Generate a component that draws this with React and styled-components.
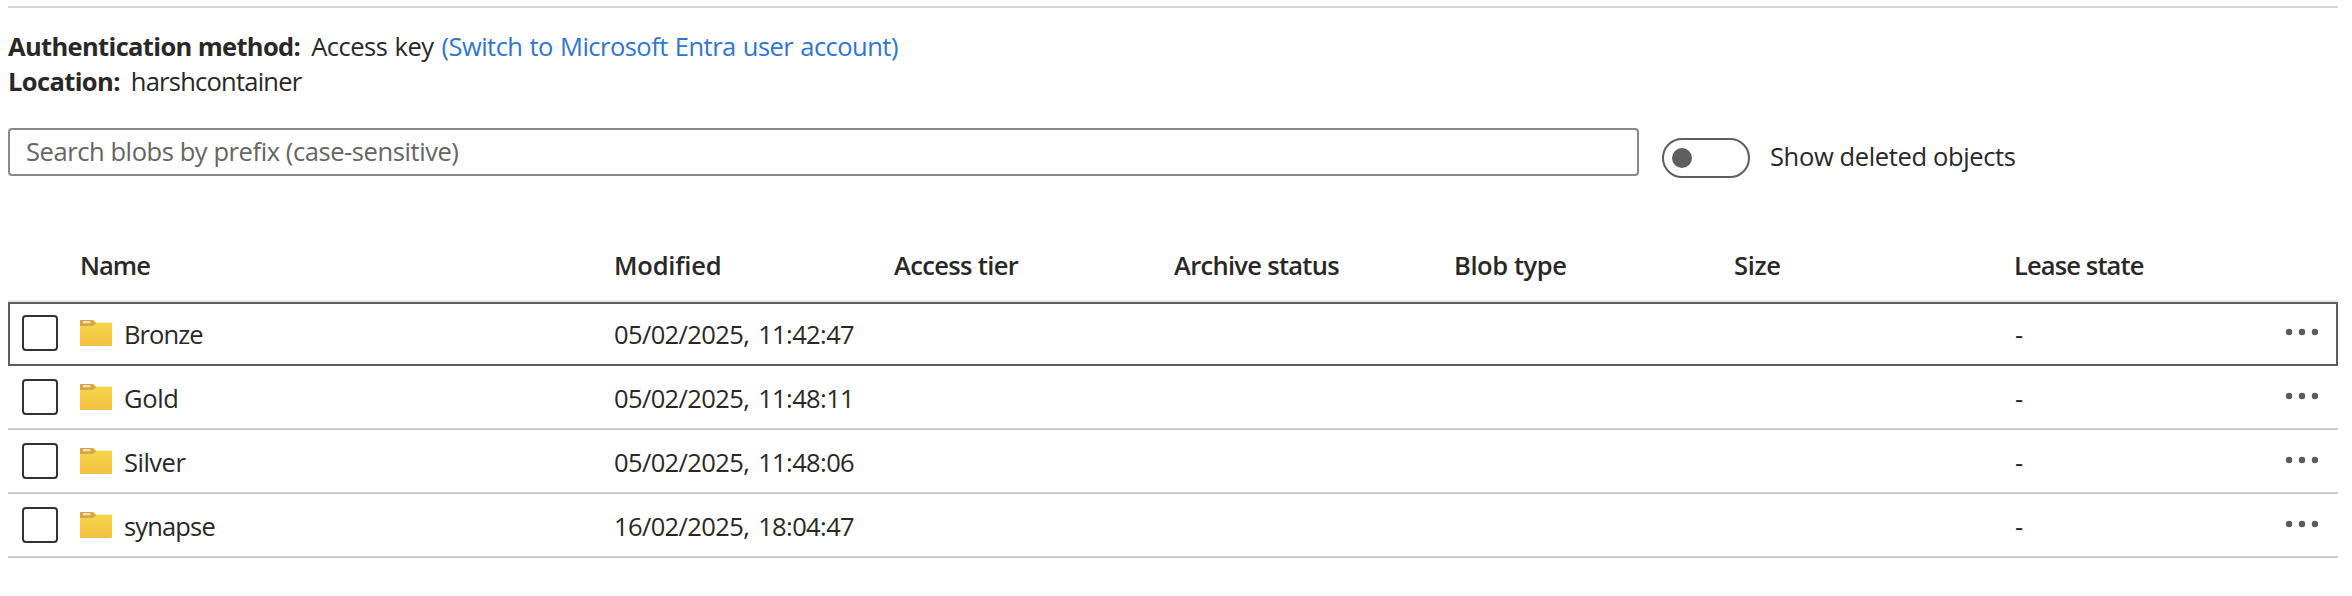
import React from "react";
import styled, { createGlobalStyle, css } from "styled-components";

const GlobalStyle = createGlobalStyle`
  * { box-sizing: border-box; }
  body {
    margin: 0;
    background: #fff;
    color: #292827;
    font-family: "Open Sans", "Noto Sans", sans-serif;
    font-size: 25.5px;
    line-height: 35px;
  }
`;

const Page = styled.main`
  width: 2352px;
  height: 596px;
  padding: 6px 14px 0 8px;
  overflow: hidden;
`;

const Divider = styled.hr`
  height: 2px;
  margin: 0 0 21px;
  border: 0;
  background: #d6d6d6;
`;

const Text = styled.span`
  white-space: pre;
  letter-spacing: ${(p) => p.$spacing ?? 0}px;
  word-spacing: ${(p) => p.$word ?? 0}px;
`;

const InfoLine = styled.div`
  display: flex;
  height: 35px;
`;

const InfoLabel = styled(Text)`
  margin-right: ${(p) => p.$gap}px;
  font-weight: 700;
`;

const Link = styled(Text).attrs({ as: "a" })`
  margin-left: 8px;
  color: #2f76d2;
`;

const FilterBar = styled.div`
  display: flex;
  align-items: flex-start;
  height: 50px;
  margin-top: 29px;
`;

const SearchBox = styled.div`
  display: flex;
  align-items: center;
  width: 1631px;
  height: 48px;
  padding: 0 0 2px 16px;
  border: 2px solid #8a8988;
  border-radius: 4px;
  color: #666462;
`;

const Switch = styled.div`
  display: flex;
  align-items: center;
  width: 88px;
  height: 40px;
  margin: 10px 20px 0 23px;
  padding-left: 8px;
  border: 2px solid #605e5c;
  border-radius: 20px;
`;

const Knob = styled.span`
  width: 20px;
  height: 20px;
  border-radius: 50%;
  background: #605e5c;
`;

const SwitchLabel = styled(Text)`
  margin-top: 11px;
`;

const Table = styled.div`
  margin-top: 52px;
`;

const columns = css`
  display: grid;
  grid-template-columns: 72px 534px repeat(5, 280px) 264px 1fr;
  align-items: center;
`;

const HeaderRow = styled.div`
  ${columns}
  height: 72px;
  padding-bottom: 2px;
  box-shadow: inset 0 -2px #e8e8e5;
  font-weight: 600;
`;

const Row = styled.div`
  ${columns}
  height: 64px;
  box-shadow: ${(p) => (p.$focused ? "inset 0 0 0 2px #605e5c" : "inset 0 -2px #cacaca")};
`;

const Checkbox = styled.span`
  width: 36px;
  height: 36px;
  margin: 0 0 2px 14px;
  border: 2px solid #323130;
  border-radius: 4px;
`;

const NameCell = styled.div`
  display: flex;
  align-items: center;
  gap: 12px;
`;

const LeaseState = styled(Text)`
  padding-left: 1px;
`;

const FolderSvg = styled.svg`
  flex: none;
  margin-bottom: 2px;
`;

const DotsSvg = styled.svg`
  margin: 0 0 4px 6px;
  fill: #5d5b59;
`;

function Folder() {
  return (
    <FolderSvg width="32" height="26" viewBox="0 0 32 26">
      <defs>
        <linearGradient id="folder" x1="0" y1="0" x2="0" y2="1">
          <stop offset="0" stopColor="#f8d548" />
          <stop offset="1" stopColor="#f5c042" />
        </linearGradient>
      </defs>
      <path d="M15 2h16a1 1 0 0 1 1 1v3H15z" fill="#f5ebc4" />
      <path d="M0 .5Q0 0 .5 0H13l3.5 3-3.5 3H0z" fill="#d8a53a" />
      <path d="M3 1.3h7.3v1.9H3z" fill="#fbf1de" />
      <path d="M0 6h12q1.3 0 2-1l1.4-1.4Q16 3 17 3h15v22q0 1-1 1H1q-1 0-1-1z" fill="url(#folder)" />
    </FolderSvg>
  );
}

function Dots() {
  return (
    <DotsSvg width="34" height="8" viewBox="0 0 34 8">
      <circle cx="5" cy="4" r="3.25" />
      <circle cx="18" cy="4" r="3.25" />
      <circle cx="31" cy="4" r="3.25" />
    </DotsSvg>
  );
}

const headers = [
  ["Name", -0.95],
  ["Modified", -0.19],
  ["Access tier", -0.65],
  ["Archive status", -0.7],
  ["Blob type", -0.42],
  ["Size", -0.36],
  ["Lease state", -0.87],
];

const blobs = [
  { name: "Bronze", spacing: -0.9, modified: "05/02/2025, 11:42:47", focused: true },
  { name: "Gold", spacing: -0.36, modified: "05/02/2025, 11:48:11" },
  { name: "Silver", spacing: -0.5, modified: "05/02/2025, 11:48:06" },
  { name: "synapse", spacing: -0.85, modified: "16/02/2025, 18:04:47" },
];

export default function App() {
  return (
    <Page>
      <GlobalStyle />
      <Divider />
      <InfoLine>
        <InfoLabel $spacing={-0.65} $gap={11}>Authentication method:</InfoLabel>
        <Text $spacing={-0.5} $word={1}>Access key</Text>
        <Link $spacing={-0.53} $word={1}>(Switch to Microsoft Entra user account)</Link>
      </InfoLine>
      <InfoLine>
        <InfoLabel $spacing={-0.62} $gap={11}>Location:</InfoLabel>
        <Text $spacing={-0.76}>harshcontainer</Text>
      </InfoLine>
      <FilterBar>
        <SearchBox>
          <Text $spacing={-0.42}>Search blobs by prefix (case-sensitive)</Text>
        </SearchBox>
        <Switch>
          <Knob />
        </Switch>
        <SwitchLabel $spacing={-0.36}>Show deleted objects</SwitchLabel>
      </FilterBar>
      <Table>
        <HeaderRow>
          <span />
          {headers.map(([title, spacing]) => (
            <Text key={title} $spacing={spacing}>{title}</Text>
          ))}
        </HeaderRow>
        {blobs.map((blob) => (
          <Row key={blob.name} $focused={blob.focused}>
            <Checkbox />
            <NameCell>
              <Folder />
              <Text $spacing={blob.spacing}>{blob.name}</Text>
            </NameCell>
            <Text $spacing={-0.62} $word={3}>{blob.modified}</Text>
            <span />
            <span />
            <span />
            <span />
            <LeaseState>-</LeaseState>
            <Dots />
          </Row>
        ))}
      </Table>
    </Page>
  );
}
